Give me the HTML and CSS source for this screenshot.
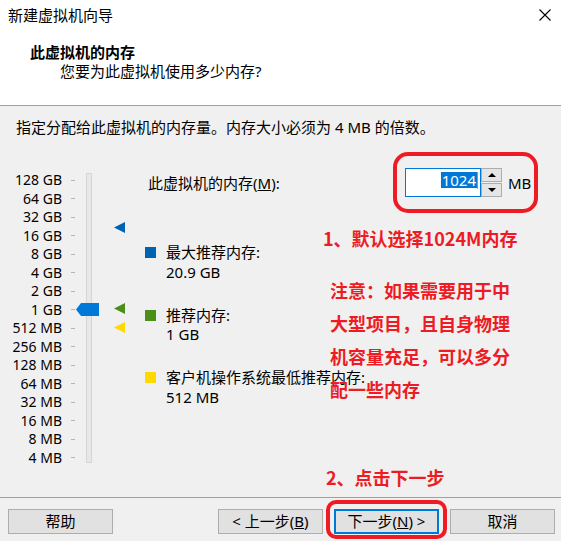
FILE: index.html
```html
<!DOCTYPE html>
<html lang="zh-CN">
<head>
    <meta charset="UTF-8">
    <title>新建虚拟机向导</title>
    <link rel="stylesheet" href="styles.css">
</head>
<body>
<div id="wizard">
    <div class="top">
        <div class="titlebar">
            <span class="title">新建虚拟机向导</span>
            <svg class="close" width="12" height="12" viewBox="0 0 12 12"><path d="M0.5 0.5 L11.5 11.5 M11.5 0.5 L0.5 11.5" stroke="#000" stroke-width="1.1" fill="none"/></svg>
        </div>
        <div class="head">
            <div class="head_title">此虚拟机的内存</div>
            <div class="head_sub">您要为此虚拟机使用多少内存?</div>
        </div>
    </div>

    <div class="content">
        <div class="intro">指定分配给此虚拟机的内存量。内存大小必须为 4 MB 的倍数。</div>

        <div class="memory">
            <div class="scale">
                <div class="scale_row"><span class="scale_lable">128 GB</span><span class="tick"></span></div>
                <div class="scale_row"><span class="scale_lable">64 GB</span><span class="tick"></span></div>
                <div class="scale_row"><span class="scale_lable">32 GB</span><span class="tick"></span></div>
                <div class="scale_row"><span class="scale_lable">16 GB</span><span class="tick"></span></div>
                <div class="scale_row"><span class="scale_lable">8 GB</span><span class="tick"></span></div>
                <div class="scale_row"><span class="scale_lable">4 GB</span><span class="tick"></span></div>
                <div class="scale_row"><span class="scale_lable">2 GB</span><span class="tick"></span></div>
                <div class="scale_row"><span class="scale_lable">1 GB</span><span class="tick"></span></div>
                <div class="scale_row"><span class="scale_lable">512 MB</span><span class="tick"></span></div>
                <div class="scale_row"><span class="scale_lable">256 MB</span><span class="tick"></span></div>
                <div class="scale_row"><span class="scale_lable">128 MB</span><span class="tick"></span></div>
                <div class="scale_row"><span class="scale_lable">64 MB</span><span class="tick"></span></div>
                <div class="scale_row"><span class="scale_lable">32 MB</span><span class="tick"></span></div>
                <div class="scale_row"><span class="scale_lable">16 MB</span><span class="tick"></span></div>
                <div class="scale_row"><span class="scale_lable">8 MB</span><span class="tick"></span></div>
                <div class="scale_row"><span class="scale_lable">4 MB</span><span class="tick"></span></div>
            </div>
            <div class="track"></div>

            <svg class="thumb" width="24" height="14" viewBox="0 0 24 14"><polygon points="0,6.5 5,0 23,0 23,13 5,13" fill="#0078d7"/></svg>
            <svg class="marker marker_max" width="11" height="11" viewBox="0 0 11 11"><polygon points="0,5.5 11,0 11,11" fill="#0063b1"/></svg>
            <svg class="marker marker_rec" width="11" height="11" viewBox="0 0 11 11"><polygon points="0,5.5 11,0 11,11" fill="#4a8f17"/></svg>
            <svg class="marker marker_min" width="11" height="11" viewBox="0 0 11 11"><polygon points="0,5.5 11,0 11,11" fill="#ffd800"/></svg>

            <div class="details">
                <div class="mem_row">
                    <span class="mem_lable">此虚拟机的内存(<u>M</u>):</span>
                    <div class="spin">
                        <div class="spin_input"><span class="sel">1024</span><span class="caret"></span></div>
                        <div class="spin_btns">
                            <div class="spin_btn"><span class="arrow_up"></span></div>
                            <div class="spin_btn"><span class="arrow_down"></span></div>
                        </div>
                    </div>
                    <span class="unit">MB</span>
                </div>

                <div class="legend legend_first">
                    <span class="swatch blue"></span>
                    <div>
                        <div class="legend_line">最大推荐内存:</div>
                        <div class="legend_line">20.9 GB</div>
                    </div>
                </div>
                <div class="legend">
                    <span class="swatch green"></span>
                    <div>
                        <div class="legend_line">推荐内存:</div>
                        <div class="legend_line">1 GB</div>
                    </div>
                </div>
                <div class="legend">
                    <span class="swatch yellow"></span>
                    <div>
                        <div class="legend_line">客户机操作系统最低推荐内存:</div>
                        <div class="legend_line">512 MB</div>
                    </div>
                </div>
            </div>
        </div>
    </div>

    <div class="footer">
        <button class="btn">帮助</button>
        <div class="btn_group">
            <button class="btn">&lt; 上一步(<u>B</u>)</button>
            <button class="btn btn_default">下一步(<u>N</u>) &gt;</button>
            <button class="btn">取消</button>
        </div>
    </div>

    <!-- 标注 -->
    <div class="mark_box mark_spin"></div>
    <div class="mark_box mark_next"></div>
    <div class="note note_1">1、默认选择1024M内存</div>
    <div class="note note_2">注意：如果需要用于中<br>大型项目，且自身物理<br>机容量充足，可以多分<br>配一些内存</div>
    <div class="note note_3">2、点击下一步</div>
</div>
</body>
</html>
```

FILE: styles.css
```css
body{
    margin: 0;
    background-color: #f0f0f0;
    font-family: "Noto Sans", "Noto Sans CJK SC", sans-serif;
    font-size: 15px;
    color: #000;
}
#wizard{
    position: relative;
    width: 561px;
    height: 541px;
    overflow: hidden;
}
.top{
    background-color: #fff;
    height: 106px;
    box-sizing: border-box;
    border-bottom: 1px solid #a0a0a0;
}
.titlebar{
    height: 30px;
    display: flex;
    align-items: center;
    justify-content: space-between;
    padding: 0 10px 0 8px;
}
.title{
    line-height: 30px;
}
.head{
    margin-top: 12px;
    padding-left: 30px;
    line-height: 20px;
}
.head_title{
    font-weight: bold;
}
.head_sub{
    padding-left: 30px;
    margin-top: -1px;
}
.content{
    height: 391px;
}
.intro{
    padding: 11px 16px 0 16px;
    line-height: 20px;
}
.memory{
    position: relative;
    display: flex;
    height: 300px;
    margin-top: 28px;
}
.scale{
    width: 76px;
    padding-top: 6px;
}
.scale_row{
    display: flex;
    align-items: center;
    height: 18.5px;
}
.scale_lable{
    width: 62px;
    text-align: right;
    font-size: 14px;
    line-height: 18.5px;
    white-space: nowrap;
}
.tick{
    width: 4px;
    height: 1px;
    margin-left: 9px;
    background-color: #b4b4b4;
}
.track{
    width: 6px;
    height: 290px;
    margin: 8px 0 0 10px;
    box-sizing: border-box;
    border: 1px solid #d6d6d6;
    background-color: #e7e7e7;
}
.thumb{
    position: absolute;
    left: 76px;
    top: 138px;
}
.marker{
    position: absolute;
    left: 114px;
}
.marker_max{
    top: 57px;
}
.marker_rec{
    top: 138px;
}
.marker_min{
    top: 157px;
}
.details{
    margin-left: 53px;
    padding-top: 3px;
}
.mem_row{
    display: flex;
    align-items: center;
    height: 29px;
}
.mem_lable{
    width: 257px;
    margin-left: 3px;
}
.spin{
    display: flex;
    height: 29px;
}
.spin_input{
    width: 76px;
    box-sizing: border-box;
    border: 1px solid #0078d7;
    background-color: #fff;
    display: flex;
    justify-content: flex-end;
    align-items: flex-start;
    padding: 3px 2px 0 0;
}
.sel{
    background-color: #0078d7;
    color: #fff;
    line-height: 16px;
    padding: 0 1px;
}
.caret{
    width: 1px;
    height: 17px;
    background-color: #e8821e;
}
.spin_btns{
    display: flex;
    flex-direction: column;
    justify-content: space-between;
    width: 21px;
}
.spin_btn{
    height: 14px;
    box-sizing: border-box;
    border: 1px solid #adadad;
    background-color: #e5e5e5;
    display: flex;
    align-items: center;
    justify-content: center;
}
.arrow_up{
    border-left: 4px solid transparent;
    border-right: 4px solid transparent;
    border-bottom: 4px solid #000;
}
.arrow_down{
    border-left: 4px solid transparent;
    border-right: 4px solid transparent;
    border-top: 4px solid #000;
}
.unit{
    margin-left: 6px;
}
.legend{
    display: flex;
    margin-top: 23.5px;
}
.legend_first{
    margin-top: 46px;
}
.legend_line{
    line-height: 19.5px;
    white-space: nowrap;
}
.swatch{
    width: 11px;
    height: 11px;
    margin: 4px 10px 0 0;
}
.blue{
    background-color: #0063b1;
}
.green{
    background-color: #4a8f17;
}
.yellow{
    background-color: #ffd800;
}
.footer{
    border-top: 1px solid #a0a0a0;
    display: flex;
    justify-content: space-between;
    padding: 11px 6px 0 8px;
}
.btn_group{
    display: flex;
    gap: 11px;
}
.btn{
    width: 105px;
    height: 25px;
    font-family: "Noto Sans", "Noto Sans CJK SC", sans-serif;
    font-size: 15px;
    line-height: 21px;
    padding: 0;
    color: #000;
    background-color: #e1e1e1;
    border: 1px solid #adadad;
}
.btn_default{
    border: 2px solid #0078d7;
}
.mark_box{
    position: absolute;
    box-sizing: border-box;
    border: 4px solid #ed1c24;
}
.mark_spin{
    left: 393px;
    top: 152px;
    width: 145px;
    height: 61px;
    border-radius: 15px;
}
.mark_next{
    left: 326px;
    top: 500px;
    width: 121px;
    height: 39px;
    border-radius: 10px;
}
.note{
    position: absolute;
    color: #ed1c24;
    font-family: "Noto Sans CJK SC", sans-serif;
    font-weight: bold;
    font-size: 18px;
    line-height: 33px;
    white-space: nowrap;
}
.note_1{
    left: 323px;
    top: 222px;
}
.note_2{
    left: 330px;
    top: 274px;
}
.note_3{
    left: 326px;
    top: 461px;
}
```
